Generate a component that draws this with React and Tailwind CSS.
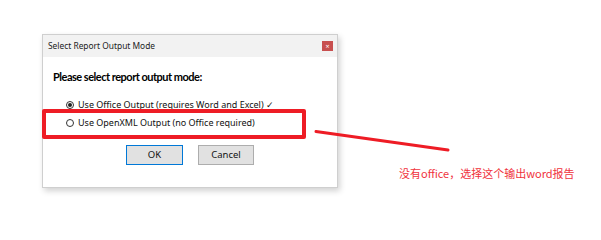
export default function App() {
  return (
    <div className="relative w-[601px] h-[240px] bg-white overflow-hidden" style={{ fontFamily: '"Noto Sans", "Open Sans", sans-serif' }}>
      <div className="absolute left-[42px] top-[34px] w-[296px] h-[154px] border border-[#cfcfcf] bg-white shadow-[2px_3px_6px_rgba(0,0,0,0.18)] flex flex-col">
        <div className="h-[22px] bg-[#f2f2f2] flex items-center justify-between pl-[5px] pr-[4px]">
          <span className="text-[8.4px] text-[#222]">Select Report Output Mode</span>
          <div className="w-[11px] h-[10px] bg-[#c84f4f] flex items-center justify-center text-white text-[7px] leading-none">×</div>
        </div>
        <div className="flex flex-col pl-[10px] pt-[13px]">
          <div className="text-[11px] font-bold text-black leading-[14px] tracking-[-0.5px]" style={{ fontFamily: 'Lato, "Noto Sans", sans-serif' }}>Please select report output mode:</div>
          <div className="mt-[15px] flex flex-col gap-[6px] pl-[13px]">
            <div className="flex items-center gap-[4px] h-[12px]">
              <span className="w-[8px] h-[8px] rounded-full border border-[#333] flex items-center justify-center">
                <span className="w-[4px] h-[4px] rounded-full bg-[#222]"></span>
              </span>
              <span className="text-[9px] text-[#111]">Use Office Output (requires Word and Excel) ✓</span>
            </div>
            <div className="flex items-center gap-[4px] h-[12px]">
              <span className="w-[8px] h-[8px] rounded-full border border-[#333]"></span>
              <span className="text-[9px] text-[#111]">Use OpenXML Output (no Office required)</span>
            </div>
          </div>
          <div className="mt-[16px] flex gap-[15px] pl-[73px]">
            <button className="w-[57px] h-[20px] bg-[#e1e1e1] border border-[#0078d7] text-[9.5px] text-[#111]">OK</button>
            <button className="w-[56px] h-[20px] bg-[#e1e1e1] border border-[#adadad] text-[9.5px] text-[#111]">Cancel</button>
          </div>
        </div>
      </div>
      <div className="absolute left-[42px] top-[109px] w-[264px] h-[30px] border-[4px] border-[#ee1c25] rounded-[2px]"></div>
      <svg className="absolute left-0 top-0" width="601" height="240">
        <line x1="316" y1="131.5" x2="448" y2="150" stroke="#ee1c25" strokeWidth="3" strokeLinecap="round" />
      </svg>
      <div className="absolute left-[399px] top-[165px] text-[11px] text-[#f0323c]" style={{ fontFamily: '"Noto Sans CJK SC", "Noto Sans", sans-serif' }}>没有office，选择这个输出word报告</div>
    </div>
  );
}
